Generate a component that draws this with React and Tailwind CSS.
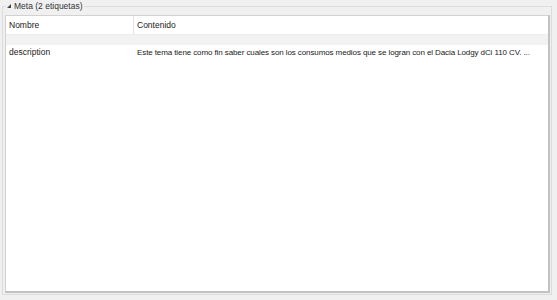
import React from 'react';

const rows = [
  {
    name: 'description',
    content:
      'Este tema tiene como fin saber cuales son los consumos medios que se logran con el Dacia Lodgy dCi 110 CV. ...',
  },
];

export default function App() {
  return (
    <div className="w-[557px] h-[300px] bg-[#f0f0f0] overflow-hidden pt-[2px] font-['Segoe_UI','Liberation_Sans',sans-serif] text-[#1a1a1a] text-[8.5px] leading-none">
      <fieldset className="ml-[2px] w-[550px] h-[293px] border border-[#dcdcdc] pl-[2px] pr-[1px] pb-[1px]">
        <legend className="ml-[1px] px-[1px] flex items-center gap-[3px] text-[#333]">
          <svg width="4" height="4" viewBox="0 0 4 4">
            <polygon points="4,0 4,4 0,4" fill="#444" />
          </svg>
          <span>Meta (2 etiquetas)</span>
        </legend>
        <div className="mt-[4px] w-[545px] h-[278px] bg-white border-l border-t border-[#d2d2d2] border-r-2 border-b-2 border-r-[#c2c2c2] border-b-[#c2c2c2] flex flex-col">
          <div className="flex h-[19px] border-b border-[#ececec]">
            <div className="w-[128px] pl-[3px] pt-[2px] flex items-center border-r border-[#e3e3e3]">Nombre</div>
            <div className="flex-1 pl-[3px] pt-[2px] flex items-center">Contenido</div>
          </div>
          <div className="h-[10px] bg-[#f2f2f2]" />
          {rows.map((r) => (
            <div key={r.name} className="flex h-[15px] pt-[1px] items-center">
              <div className="w-[129px] pl-[3px]">{r.name}</div>
              <div className="flex-1 pl-[2px] whitespace-nowrap overflow-hidden text-[8px] tracking-[-0.1px]">{r.content}</div>
            </div>
          ))}
        </div>
      </fieldset>
    </div>
  );
}
